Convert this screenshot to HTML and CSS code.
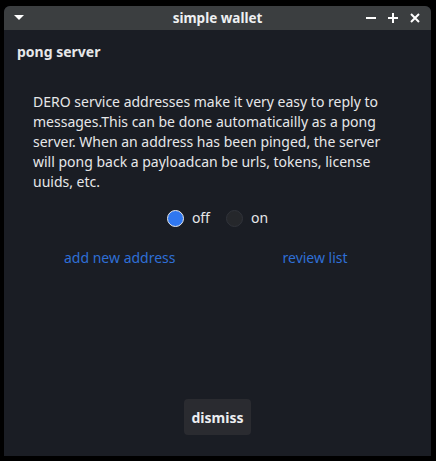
FILE: index.html
```html
<!DOCTYPE html>
<html>
<head>
<meta charset="utf-8">
<link rel="stylesheet" href="styles.css">
</head>
<body>
<div class="window">
  <div class="titlebar">
    <svg class="tb-menu" width="10" height="6" viewBox="0 0 10 6"><polygon points="0,0 10,0 5,5" fill="#ffffff"/></svg>
    <div class="title">simple wallet</div>
    <div class="tb-buttons">
      <svg width="10" height="10" viewBox="0 0 10 10"><rect x="0" y="4" width="10" height="2" fill="#fff"/></svg>
      <svg width="10" height="10" viewBox="0 0 10 10"><rect x="0" y="4" width="10" height="2" fill="#fff"/><rect x="4" y="0" width="2" height="10" fill="#fff"/></svg>
      <svg width="10" height="10" viewBox="0 0 10 10"><path d="M1 1 L9 9 M9 1 L1 9" stroke="#fff" stroke-width="2"/></svg>
    </div>
  </div>
  <div class="content">
    <div class="heading">pong server</div>
    <p class="desc">DERO service addresses make it very easy to reply to messages.This can be done automaticailly as a pong server. When an address has been pinged, the server will pong back a payloadcan be urls, tokens, license uuids, etc.</p>
    <div class="radios">
      <div class="radio"><span class="dot on"></span><span>off</span></div>
      <div class="radio"><span class="dot"></span><span>on</span></div>
    </div>
    <div class="links">
      <span class="link">add new address</span>
      <span class="link">review list</span>
    </div>
    <div class="spacer"></div>
    <div class="actions">
      <button class="btn">dismiss</button>
    </div>
  </div>
</div>
</body>
</html>
```

FILE: styles.css
```css
html, body {
  margin: 0;
  padding: 0;
  background: #000;
  width: 436px;
  height: 461px;
  overflow: hidden;
}
body {
  padding: 6px 5px 5px 4px;
  box-sizing: border-box;
  font-family: "Noto Sans", "Open Sans", sans-serif;
}
.window {
  width: 427px;
  height: 450px;
  display: flex;
  flex-direction: column;
  background: #1a1d24;
  border-radius: 6px 6px 0 0;
  overflow: hidden;
}
.titlebar {
  height: 24px;
  background: #3b3e40;
  display: flex;
  align-items: center;
  position: relative;
  flex: none;
}
.tb-menu {
  margin-left: 10px;
}
.title {
  position: absolute;
  left: 0;
  right: 0;
  text-align: center;
  color: #eef0f2;
  font-weight: bold;
  font-size: 13.5px;
  pointer-events: none;
}
.tb-buttons {
  margin-left: auto;
  margin-right: 11px;
  display: flex;
  gap: 12px;
}
.tb-buttons svg { display: block; }
.content {
  flex: 1;
  display: flex;
  flex-direction: column;
  color: #e6e7e9;
  font-size: 14px;
}
.heading {
  font-weight: bold;
  font-size: 14px;
  margin: 12px 0 0 13px;
  line-height: 20px;
}
.desc {
  margin: 30px 0 0 29px;
  width: 372px;
  line-height: 20px;
}
.radios {
  display: flex;
  justify-content: center;
  gap: 16px;
  margin-top: 16px;
  line-height: 20px;
}
.radio {
  display: flex;
  align-items: center;
  gap: 8px;
}
.dot {
  width: 17px;
  height: 17px;
  border-radius: 50%;
  background: #25272b;
  box-sizing: border-box;
  border: 1px solid #30333a;
}
.dot.on {
  background: #2f77f0;
  border: 1.5px solid #e8e8e8;
}
.links {
  display: flex;
  margin-top: 20px;
  line-height: 20px;
  padding-left: 60px;
  gap: 107px;
}
.link {
  color: #2f6fd6;
}
.spacer { flex: 1; }
.actions {
  display: flex;
  justify-content: center;
  margin-bottom: 21px;
  padding-left: 0;
}
.btn {
  background: #2a2b30;
  color: #eceef0;
  border: none;
  border-radius: 4px;
  font-family: "Noto Sans", "Open Sans", sans-serif;
  font-weight: bold;
  font-size: 14px;
  width: 67px;
  height: 36px;
  padding: 0;
}
```
